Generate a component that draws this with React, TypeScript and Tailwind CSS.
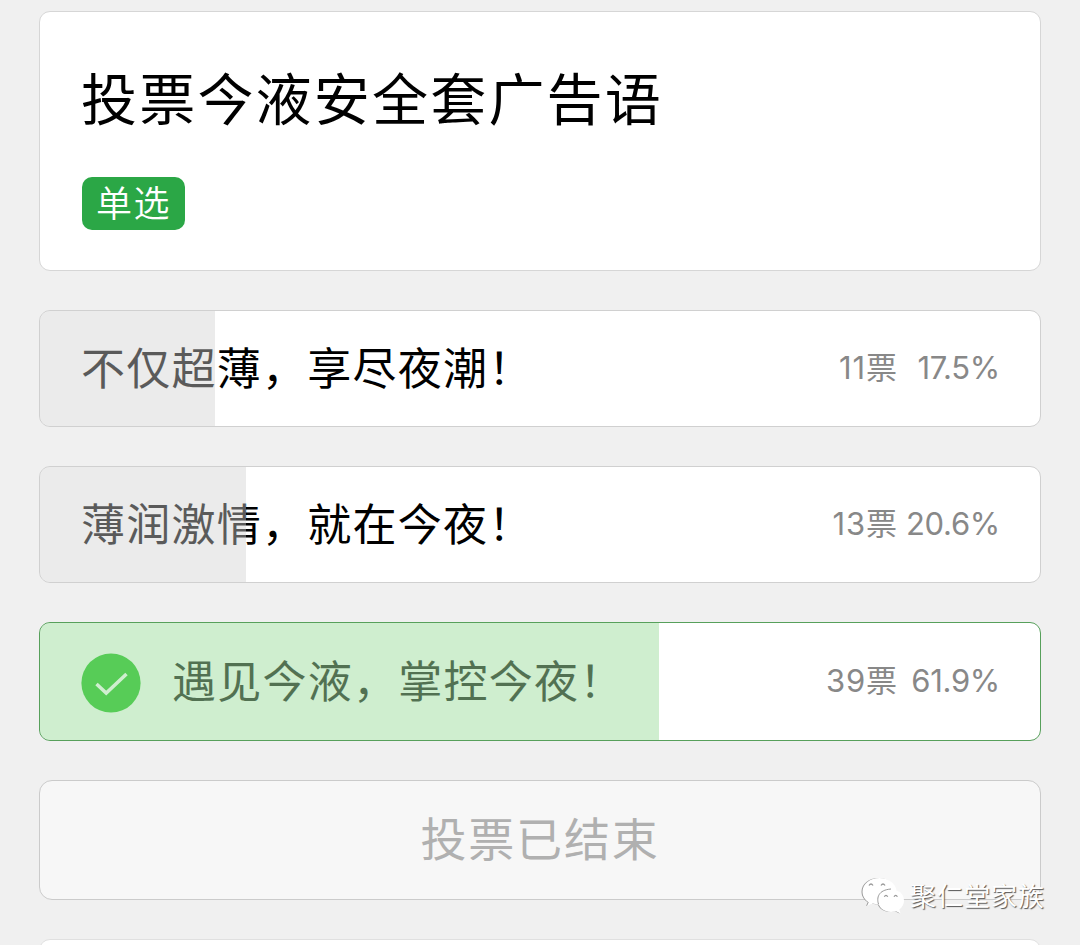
import clsx from "clsx"

type Option = {
  label: string
  votes: number
  percent: number
  selected?: boolean
}

const options: Option[] = [
  { label: "不仅超薄，享尽夜潮！", votes: 11, percent: 17.5 },
  { label: "薄润激情，就在今夜！", votes: 13, percent: 20.6 },
  { label: "遇见今液，掌控今夜！", votes: 39, percent: 61.9, selected: true },
]

function CheckBadge() {
  return (
    <svg viewBox="0 0 60 60" className="mt-[3px] mr-[31px] size-[60px] shrink-0">
      <circle cx="30" cy="30" r="29.6" fill="#0bb90b" />
      <path d="M15.5 31 25.2 40 45.5 21" fill="none" stroke="#fff" strokeWidth="3.500" />
    </svg>
  )
}

function OptionRow({ label, votes, percent, selected }: Option) {
  return (
    <li
      className={clsx(
        "relative flex items-center overflow-hidden rounded-[11px] border bg-white pr-10 pl-[41px]",
        selected ? "h-[119px] border-[#57a05b]" : "h-[117px] border-[#d0d0d0]"
      )}
    >
      {selected && <CheckBadge />}
      <span className="grow text-[44px] leading-none tracking-[1.250px] whitespace-nowrap text-black">
        {label}
      </span>
      <div className="flex pb-0.5 text-[31px] leading-none whitespace-nowrap text-[#888]">
        <span className="tracking-[0.9px]">{votes}票</span>
        <span className="w-[102px] text-right tracking-[-0.3px]">{percent}%</span>
      </div>
      <div
        className={clsx(
          "absolute inset-y-0 left-0",
          selected ? "bg-[rgb(160,222,160)]/51" : "bg-[rgb(208,208,208)]/43"
        )}
        style={{ width: `${percent}%` }}
      />
    </li>
  )
}

function WechatLogo() {
  return (
    <svg viewBox="0 0 44 38" className="h-[38px] w-11 drop-shadow-[-0.3px_0.8px_0.4px_#999]">
      <path
        d="M18.5 1C9 1 1.500 7 1.500 14.800c0 4.400 2.400 8 6.200 10.500L6 29l5.800-2.400c2.200.7 4.400 1 6.700 1 9.500 0 17-6 17-13.300S28 1 18.500 1Z"
        fill="#fff"
      />
      <path
        d="M30 12c-7.400 0-13 5-13 11.600S22.600 35 30 35c1.800 0 3.500-.3 5-.8l4.500 2.300-1.200-3.900c3-2.100 4.700-5.300 4.700-9C43 17 37.400 12 30 12Z"
        fill="#fff"
      />
      <path
        d="M17.500 27c-2-6-.5-14 12.500-15"
        fill="none"
        stroke="#999"
        strokeWidth="1"
      />
      <path
        d="M8 8.500q2-3 4 0M20 8.500q2-3 4 0M23.300 19.800q1.700-3 3.400 0M33 19.800q1.700-3 3.400 0"
        fill="none"
        stroke="#999"
        strokeWidth="1.300"
      />
    </svg>
  )
}

export default function App() {
  return (
    <main className="relative h-[945px] w-[1080px] overflow-hidden bg-[#f0f0f0] px-[39px] pt-[11px] font-[Inter,'Noto_Sans_CJK_SC',sans-serif]">
      <section className="h-[260px] rounded-[11px] border border-[#d6d6d6] bg-white px-[41px] pt-[59px]">
        <h1 className="text-[56px] leading-[58px] tracking-[2.200px] text-black">投票今液安全套广告语</h1>
        <span className="mt-12 ml-px flex h-[53px] w-[103px] items-center justify-center rounded-[10px] bg-[#2ba746] text-[36px] leading-none font-[350] tracking-[1.500px] text-white">
          单选
        </span>
      </section>

      <ul className="mt-[39px] flex flex-col gap-[39px]">
        {options.map((option) => (
          <OptionRow key={option.label} {...option} />
        ))}
      </ul>

      <button
        disabled
        className="mt-[39px] flex h-[120px] w-full items-center justify-center rounded-[13px] border border-[#cbcbcb] bg-[#f7f7f7] pb-0.5 text-[46px] leading-none tracking-[1.800px] text-[#b0b0b0]"
      >
        投票已结束
      </button>

      <section className="mt-[39px] h-20 rounded-[11px] border border-[#e0e0e0] bg-white" />

      <div className="absolute top-[877px] left-[861px] flex items-center">
        <WechatLogo />
        <span className="mt-0.5 ml-[5px] text-[26px] leading-none tracking-[1px] whitespace-nowrap text-white [text-shadow:1px_1px_1px_#555]">
          聚仁堂家族
        </span>
      </div>
    </main>
  )
}
